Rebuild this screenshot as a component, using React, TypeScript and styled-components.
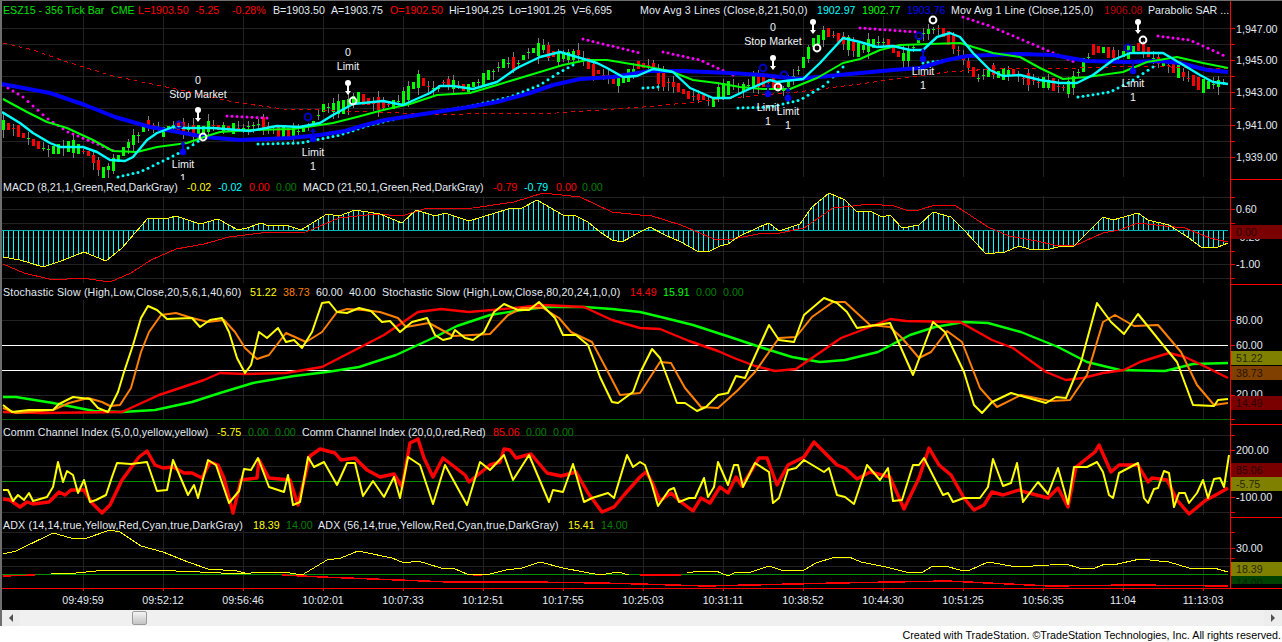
import React from 'react';
import styled, { createGlobalStyle } from 'styled-components';

type Pt = [number, number];

const pts = (s: string): Pt[] =>
  s
    .trim()
    .split(/\s+/)
    .map((p) => p.split(',').map(Number) as Pt);

const yAt = (line: Pt[], x: number) => {
  if (x <= line[0][0]) return line[0][1];
  for (let i = 1; i < line.length; i++) {
    if (x <= line[i][0]) {
      const [x0, y0] = line[i - 1];
      const [x1, y1] = line[i];
      return y0 + ((y1 - y0) * (x - x0)) / (x1 - x0);
    }
  }
  return line[line.length - 1][1];
};

// main pane
const BLUE = '2,84 50,93 85,105 115,117 150,127 178,132 205,137 240,140 290,138 320,135 345,131 365,125 385,120 430,113 463,108 497,102 530,93 553,85 580,79 613,77 650,71 683,71 730,73 763,75 797,79 860,73 893,70 920,68 947,60 967,56 1020,54 1053,55 1087,61 1127,62 1160,61 1180,63 1207,70 1228,72';
const CYAN = '2,112 20,123 33,133 50,143 60,147 83,147 97,152 110,160 125,161 133,157 147,140 157,133 173,127 185,128 213,128 250,131 277,126 300,127 320,123 333,115 353,104 383,101 403,105 430,93 440,86 453,86 473,89 497,82 517,68 540,57 560,52 577,57 597,63 607,68 623,77 637,76 653,69 673,72 690,88 713,98 730,98 747,90 770,80 777,82 803,79 820,63 843,38 860,42 877,47 893,46 910,50 923,50 937,37 950,33 960,37 973,53 990,70 1003,76 1020,75 1040,80 1060,83 1077,83 1093,75 1113,60 1130,53 1163,53 1180,63 1200,75 1213,82 1228,84';
const GREEN = '3,99 27,112 47,122 67,128 93,140 113,151 137,152 157,147 187,143 207,136 220,132 250,130 293,129 307,127 333,123 357,117 383,110 410,104 437,95 470,93 497,85 530,75 563,65 587,60 607,60 643,66 670,71 693,80 717,83 740,87 763,89 790,89 817,78 843,63 860,59 880,50 900,45 960,43 993,53 1020,57 1040,68 1063,79 1087,77 1123,72 1147,62 1177,57 1203,63 1228,68';
const DASH = '3,43 33,50 67,62 113,76 147,83 190,92 233,102 283,109 323,110 367,112 430,114 463,114 557,113 643,107 697,102 750,96 797,92 860,84 910,77 947,72 993,69 1077,68 1143,66 1227,69';
const PRICE = pts('3,125 13,128 23,135 33,142 43,148 53,150 63,147 73,147 88,153 98,165 103,172 113,165 122,153 128,145 138,135 148,123 153,125 163,132 173,125 183,128 200,132 210,125 223,128 243,128 263,123 277,132 297,132 313,123 323,108 343,107 357,97 373,103 393,105 408,93 417,80 423,82 430,88 437,90 443,82 455,85 467,88 477,83 487,76 503,63 518,63 528,52 543,48 558,57 573,55 578,52 593,70 607,77 617,82 630,75 638,65 653,65 658,78 670,83 678,87 688,95 703,98 713,103 718,92 733,85 743,88 758,80 773,83 783,90 802,65 813,43 827,32 833,35 848,43 858,50 863,47 873,43 888,42 893,50 903,57 908,55 923,33 938,28 953,42 958,50 963,57 973,72 978,78 993,70 998,75 1013,72 1023,78 1038,82 1053,85 1068,88 1073,82 1078,72 1093,50 1103,50 1118,57 1137,47 1143,47 1153,58 1173,68 1188,78 1203,86 1227,82');
const SAR_MAGENTA = ['3,85 13,91 23,97 33,106 48,119 68,132 102,146 117,152', '227,116 267,118', '583,39 640,53', '663,52 700,60 733,75', '860,28 917,32', '963,17 990,26 1030,43 1077,63', '1158,36 1190,40 1227,57'];
const SAR_CYAN = ['118,177 140,172 165,160 185,150 200,140', '258,144 300,143 340,135 370,125 400,118 430,113 470,106 510,97 540,85 560,72 577,63', '643,88 660,87', '738,108 770,107 800,100 825,85 843,67', '923,63 947,60', '1078,97 1110,92 1130,82 1153,67'];

// macd pane
const MACD_Y = pts('3,257 20,260 43,267 61,261 84,252 106,261 122,248 148,218 169,218 176,216 200,224 218,219 238,230 247,228 261,223 269,226 286,225 301,230 327,214 339,216 355,210 380,214 402,223 416,210 435,216 445,213 469,221 508,209 522,208 537,200 563,215 576,216 588,222 600,232 612,240 622,242 640,232 650,227 665,235 681,242 697,251 708,252 720,246 728,244 738,237 759,227 769,223 779,231 800,224 812,207 829,193 845,200 857,212 870,211 882,217 890,215 902,228 919,225 933,212 951,217 964,230 986,254 1005,252 1019,246 1029,249 1050,249 1062,246 1074,246 1103,217 1113,220 1138,213 1148,220 1169,225 1189,238 1201,247 1218,247 1228,243');
const MACD_R = '3,264 24,273 53,280 82,278 110,282 131,273 151,260 176,249 204,244 229,237 261,233 306,232 339,218 376,214 402,216 424,209 473,208 514,202 543,193 580,197 612,212 640,215 652,216 681,225 714,239 728,240 738,238 763,233 775,234 804,228 833,208 853,206 870,204 894,206 906,210 919,210 935,205 956,206 988,227 1009,236 1037,241 1054,245 1074,246 1103,233 1119,230 1138,223 1165,226 1185,228 1210,238 1228,242';

// stochastic pane
const ST_YELLOW = '3,405 12,412 29,410 53,410 59,404 73,397 90,399 98,408 108,412 118,392 124,372 133,345 141,318 148,306 157,310 167,319 192,318 200,327 210,320 222,318 229,332 237,358 245,373 251,365 259,332 267,338 278,328 286,342 294,340 302,348 312,332 322,303 329,302 337,312 347,313 359,308 371,311 382,322 390,321 400,332 412,322 427,318 435,335 443,340 451,338 455,330 465,338 473,340 484,332 494,312 504,304 518,310 529,310 539,302 555,318 563,335 576,335 588,345 600,377 612,402 618,403 633,392 640,373 652,349 660,358 677,403 685,403 697,411 706,407 718,395 728,393 736,376 745,378 769,325 779,340 794,342 804,315 824,298 837,303 847,312 857,328 890,323 913,375 933,322 945,332 964,372 974,405 982,413 992,402 1011,393 1046,403 1056,397 1066,398 1081,362 1097,303 1111,322 1124,334 1138,314 1163,345 1177,362 1193,405 1214,406 1218,400 1228,399';
const ST_ORANGE = '3,408 16,413 53,410 69,403 88,398 102,402 110,406 120,405 131,388 141,352 149,332 161,315 176,313 192,318 208,322 224,320 235,332 245,348 257,359 269,355 286,333 306,342 322,332 337,312 347,309 363,310 380,312 398,318 406,327 429,323 453,336 490,334 508,315 522,308 543,308 559,318 571,332 592,342 608,372 620,395 640,393 660,362 671,363 685,388 701,407 718,408 738,390 755,372 779,338 796,337 812,317 833,302 845,302 870,325 890,327 902,338 919,358 931,352 947,331 962,342 980,388 997,407 1021,395 1050,401 1070,400 1087,375 1103,322 1115,315 1134,326 1158,325 1181,352 1197,385 1214,405 1228,403';
const ST_RED = '3,412 41,413 122,412 159,395 204,380 220,373 245,374 286,373 322,367 355,350 384,335 418,312 441,309 469,312 514,308 543,305 584,307 612,320 640,328 660,329 689,341 718,351 734,358 755,366 775,371 796,369 812,358 841,338 857,332 890,319 906,321 960,322 992,340 1013,348 1046,372 1066,380 1083,378 1103,373 1124,370 1140,362 1169,353 1185,357 1206,367 1228,378';
const ST_GREEN = '3,397 16,397 53,403 94,411 122,412 155,410 192,402 220,393 253,383 294,376 327,372 359,367 396,355 433,338 457,326 490,315 522,310 547,307 584,307 612,309 640,312 665,318 693,325 730,337 763,348 792,357 820,362 845,360 878,352 910,335 935,327 964,322 988,323 1021,332 1058,347 1087,362 1120,370 1165,371 1193,364 1228,363';

// cci pane
const CCI_RED = '3,499 10,500 20,507 27,502 33,504 49,502 59,492 65,495 71,490 84,490 92,503 102,513 110,505 122,480 139,457 147,451 155,465 163,468 173,467 184,473 192,473 202,478 210,462 218,465 224,478 233,513 241,480 257,478 259,460 269,478 290,480 298,505 310,456 320,449 335,453 341,460 355,458 367,470 380,477 394,474 402,487 410,443 418,439 424,458 433,477 443,458 465,475 469,482 490,465 500,462 504,449 510,450 516,458 531,454 547,473 561,476 576,472 588,493 602,512 614,507 624,495 640,477 646,472 652,482 660,501 671,493 681,502 693,511 701,498 710,503 720,487 728,493 736,477 742,486 759,458 767,458 777,485 788,465 804,457 814,442 837,465 845,468 857,479 870,472 890,477 904,509 919,478 929,448 939,465 951,475 964,498 974,510 984,505 992,492 1003,495 1019,490 1025,492 1048,498 1058,488 1068,507 1076,467 1095,452 1099,445 1111,472 1119,465 1138,465 1148,482 1152,478 1167,480 1177,500 1189,514 1206,500 1214,496 1228,488';
const CCI_YELLOW = '3,490 8,490 13,501 18,495 24,500 29,493 33,501 47,497 53,487 58,462 63,482 67,471 73,475 78,493 84,480 90,502 96,500 106,495 112,477 117,463 131,464 147,462 157,491 167,490 173,460 188,495 194,485 198,498 208,460 216,465 229,503 239,491 244,469 251,470 258,458 269,487 284,492 288,475 293,505 300,502 308,457 314,467 324,462 337,485 347,463 355,463 363,496 373,481 384,497 394,477 400,498 408,457 420,465 433,504 445,465 467,505 480,462 490,470 504,455 513,480 529,455 549,502 553,490 563,492 573,464 584,502 592,498 608,493 614,498 627,455 633,467 640,462 645,465 652,485 658,506 669,490 674,488 679,502 689,498 695,498 704,478 708,497 714,487 718,462 728,485 734,465 738,465 743,487 755,463 769,472 773,503 779,498 788,470 796,468 804,460 824,472 829,468 837,495 845,497 854,504 867,465 880,480 888,468 893,501 902,500 913,465 919,465 924,458 943,495 948,493 953,502 964,498 980,498 988,487 993,459 1003,486 1011,483 1017,463 1023,502 1038,482 1048,494 1058,468 1068,504 1074,467 1087,467 1097,462 1103,472 1109,495 1113,498 1119,473 1138,463 1144,498 1148,503 1154,489 1158,488 1164,471 1169,473 1174,507 1179,493 1185,493 1189,503 1197,493 1203,480 1208,498 1214,479 1220,478 1224,487 1229,455';

// adx pane
const ADX_A = '3,554 16,551 53,533 71,538 84,539 110,530 120,532 141,546 163,552 188,562 208,569 237,571 245,573';
const ADX_B = '51,574 76,573 106,570 151,570 200,572 241,574 261,572 290,573 302,575 327,560 341,558 358,551 392,558 404,563 418,561 441,568 453,568 469,575 490,574 506,570 522,568 540,562 563,568 584,572 600,575 618,572 629,575';
const ADX_C = '687,573 699,571 716,571 728,576 736,572 751,572 769,566 781,570 804,570 816,563 835,557 849,557 861,562 886,567 906,572 923,572 931,567 945,566 960,570 970,570 988,562 1017,567 1066,564 1079,568 1095,568 1105,564 1113,565 1140,559 1169,562 1189,568 1214,568 1228,572';
const ADX_R = ['3,576 35,575', '282,575 322,577 449,582 531,582 600,583 640,584 706,586 837,583 947,581 988,583 1050,586 1132,585 1228,586', '473,575 482,575', '640,575 681,575'];

const TIMES = ['09:49:59', '09:52:12', '09:56:46', '10:02:01', '10:07:33', '10:12:51', '10:17:55', '10:25:03', '10:31:11', '10:38:52', '10:44:30', '10:51:25', '10:56:35', '11:04', '11:13:03'];
const VERTICALS = TIMES.map((_, i) => 83 + i * 80);

const C = {
  text: '#e3ebf3',
  red: '#ff0000',
  dkRed: '#c00000',
  lime: '#00ff00',
  dkGreen: '#008000',
  yellow: '#ffff00',
  cyan: '#00ffff',
  orange: '#ff8000',
  blue: '#0000ff',
  navy: '#0000c8',
};

const GlobalStyle = createGlobalStyle`
  html, body {
    margin: 0;
    background: #fff;
    overflow: hidden;
  }
`;

const Page = styled.div`
  width: 1282px;
  height: 642px;
  font-family: 'Liberation Sans', Arial, sans-serif;
  font-size: 10.67px;
  display: flex;
  flex-direction: column;
`;

const ChartWindow = styled.div`
  height: 626px;
  background: #000;
  border-top: 1px solid #6e6e6e;
  border-left: 2px solid #6e6e6e;
  display: flex;
  flex-direction: column;
`;

const Pane = styled.section<{ $h: number }>`
  height: ${(p) => p.$h}px;
  flex: none;
  display: grid;
  grid-template-columns: 1228px 52px;
`;

const Plot = styled.div`
  position: relative;
  overflow: hidden;
`;

const PlotSvg = styled.svg`
  display: block;
  width: 1228px;
  height: 100%;
`;

const Legend = styled.div<{ $top?: number }>`
  position: absolute;
  top: ${(p) => p.$top ?? 0}px;
  left: 1px;
  display: flex;
  line-height: 14px;
  white-space: nowrap;
`;

const Item = styled.span<{ $w?: number; $c?: string; $ls?: number }>`
  flex: none;
  width: ${(p) => (p.$w ? `${p.$w}px` : 'auto')};
  color: ${(p) => p.$c ?? C.text};
  letter-spacing: ${(p) => p.$ls ?? 0}px;
`;

const Axis = styled.div`
  position: relative;
  overflow: hidden;
  border-left: 1px solid ${C.red};
  border-bottom: 1px solid ${C.red};
  box-sizing: border-box;
`;

const AxisSvg = styled.svg`
  position: absolute;
  left: 0;
  top: 0;
  width: 51px;
  height: 100%;
`;

const AxisLabel = styled.span<{ $y: number }>`
  position: absolute;
  left: 5px;
  top: ${(p) => p.$y - 7}px;
  line-height: 14px;
  color: ${C.text};
  white-space: nowrap;
`;

const ValueTag = styled.span<{ $y: number; $h?: number; $bg: string; $fg: string }>`
  position: absolute;
  left: 0;
  right: 0;
  top: ${(p) => p.$y}px;
  height: ${(p) => p.$h ?? 14}px;
  padding-left: 5px;
  overflow: hidden;
  line-height: 14px;
  background: ${(p) => p.$bg};
  color: ${(p) => p.$fg};
`;

const TimeAxis = styled.div`
  height: 21px;
  flex: none;
  display: flex;
  padding-left: 41px;
`;

const TimeCell = styled.span`
  position: relative;
  flex: none;
  width: 80px;
  text-align: center;
  line-height: 22px;
  color: ${C.text};
  &::before {
    content: '';
    position: absolute;
    left: 40px;
    top: 0;
    width: 1px;
    height: 2px;
    background: ${C.red};
  }
`;

const Scrollbar = styled.div`
  height: 16px;
  flex: none;
  display: flex;
  align-items: center;
  background: linear-gradient(#e2e2e2, #f0f0f0 15%, #eeeeee);
`;

const ScrollButton = styled.button<{ $dir: 'left' | 'right' }>`
  width: 18px;
  height: 100%;
  flex: none;
  padding: 0;
  border: 0;
  background: #ededed;
  display: flex;
  align-items: center;
  justify-content: center;
  &::before {
    content: '';
    border-style: solid;
    border-color: transparent;
    border-width: 4px 0 4px 0;
    ${(p) => (p.$dir === 'left' ? 'border-right: 4px solid #505050;' : 'border-left: 4px solid #505050;')}
  }
`;

const ScrollTrack = styled.div`
  flex: 1;
  height: 100%;
  background: #f0f0f0;
`;

const ScrollThumb = styled.div`
  width: 15px;
  height: 14px;
  margin: 1px 0 0 112px;
  box-sizing: border-box;
  border: 1px solid #9a9a9a;
  border-radius: 2px;
  background: linear-gradient(#f4f4f4, #dcdcdc 50%, #c4c4c4);
`;

const Footer = styled.footer`
  flex: 1;
  text-align: right;
  padding-right: 1px;
  font-size: 10.73px;
  line-height: 18px;
  color: #000;
`;

const OrderText = styled.text`
  font-family: 'Liberation Sans', Arial, sans-serif;
  font-size: 10.67px;
  fill: #f0f4f8;
  text-anchor: middle;
`;

const Grid: React.FC<{ rows: number[]; y0: number; y1: number }> = ({ rows, y0, y1 }) => (
  <g stroke="#222222" strokeWidth={1} shapeRendering="crispEdges">
    {rows.map((y) => (
      <line key={`h${y}`} x1={2} x2={1230} y1={y + 0.5} y2={y + 0.5} />
    ))}
    {VERTICALS.map((x) => (
      <line key={`v${x}`} x1={x + 0.5} x2={x + 0.5} y1={y0} y2={y1} />
    ))}
  </g>
);

const Line: React.FC<{ d: string; c: string; w?: number; dash?: string }> = ({ d, c, w = 1, dash }) => (
  <polyline
    points={d}
    fill="none"
    stroke={c}
    strokeWidth={w}
    strokeDasharray={dash}
    strokeLinejoin="round"
    shapeRendering={w < 2 ? 'crispEdges' : undefined}
  />
);

const Candles: React.FC = () => {
  let seed = 7919;
  const rnd = () => {
    seed = (seed * 16807) % 2147483647;
    return seed / 2147483647;
  };
  const bars = [];
  for (let k = 0; k < 245; k++) {
    const x = 3 + k * 5;
    const mid = yAt(PRICE, x);
    const up = yAt(PRICE, x + 5) < mid + (rnd() < 0.25 ? 4 : 0);
    const doji = rnd() < 0.3;
    const h = doji ? 1 : 4 + rnd() * 10;
    const top = Math.round(mid - h / 2);
    const hasWick = doji || rnd() < 0.5;
    const wickTop = top - (hasWick ? 2 + rnd() * 5 : 0);
    const wickBot = top + h + (hasWick ? 2 + rnd() * 6 : 0);
    bars.push(
      <g key={x} shapeRendering="crispEdges">
        <line x1={x + 0.5} x2={x + 0.5} y1={wickTop} y2={wickBot} stroke="#7c7c7c" />
        <rect x={x - 1} y={top} width={3} height={Math.round(h)} fill={up ? C.lime : C.red} />
      </g>,
    );
  }
  return <g>{bars}</g>;
};

const Dots: React.FC<{ segments: string[]; c: string }> = ({ segments, c }) => (
  <g fill={c}>
    {segments.map((s) => {
      const line = pts(s);
      const start = line[0][0];
      const end = line[line.length - 1][0];
      const dots = [];
      for (let x = start; x <= end; x += 5) {
        dots.push(<circle key={x} cx={x} cy={yAt(line, x)} r={1.5} />);
      }
      return <g key={s}>{dots}</g>;
    })}
  </g>
);

const SellPin: React.FC<{ x: number; y: number }> = ({ x, y }) => (
  <g>
    <line x1={x} x2={x} y1={y} y2={y + 11} stroke="#fff" strokeWidth={2} />
    <path d={`M${x - 3} ${y + 8}h6l-3 4z`} fill="#fff" />
    <circle cx={x} cy={y} r={3} fill="#fff" />
  </g>
);

const BuyPin: React.FC<{ x: number; y: number; len?: number }> = ({ x, y, len = 10 }) => (
  <g>
    <line x1={x} x2={x} y1={y} y2={y - len} stroke={C.navy} strokeWidth={2} />
    <path d={`M${x - 3} ${y - len + 3}h6l-3 -4z`} fill={C.navy} />
    <circle cx={x} cy={y} r={3.2} fill={C.blue} />
  </g>
);

const Ring: React.FC<{ x: number; y: number; c?: string }> = ({ x, y, c = '#fff' }) => (
  <circle cx={x} cy={y} r={3.4} fill="none" stroke={c} strokeWidth={2} />
);

const MainPlot: React.FC = () => (
  <PlotSvg viewBox="2 1 1228 179" preserveAspectRatio="none">
    <Grid rows={[28, 44, 60, 76, 92, 108, 125, 141, 157]} y0={16} y1={177} />
    <Candles />
    <Line d={DASH} c="#e00000" dash="4 4" />
    <Dots segments={SAR_MAGENTA} c="#ff00ff" />
    <Dots segments={SAR_CYAN} c={C.cyan} />
    <Line d={BLUE} c={C.blue} w={4} />
    <Line d={GREEN} c={C.lime} w={2} />
    <Line d={CYAN} c={C.cyan} w={2.4} />

    <Ring x={179} y={125} c={C.navy} />
    <Ring x={308} y={117} c={C.navy} />
    <Ring x={763} y={68} c={C.navy} />
    <Ring x={784} y={75} c={C.navy} />
    <Ring x={919} y={36} c={C.navy} />
    <Ring x={1128} y={48} c={C.navy} />
    <Ring x={203} y={137} />
    <Ring x={353} y={101} />
    <Ring x={778} y={87} />
    <Ring x={817} y={48} />
    <Ring x={933} y={20} />
    <Ring x={1143} y={40} />

    <SellPin x={198} y={110} />
    <SellPin x={348} y={83} />
    <SellPin x={773} y={58} />
    <SellPin x={813} y={22} />
    <SellPin x={1138} y={22} />
    <BuyPin x={183} y={152} />
    <BuyPin x={313} y={139} />
    <BuyPin x={768} y={94} />
    <BuyPin x={788} y={98} />
    <BuyPin x={923} y={59} />
    <BuyPin x={1133} y={71} />

    <OrderText x={198} y={84}>0</OrderText>
    <OrderText x={198} y={98}>Stop Market</OrderText>
    <OrderText x={183} y={168}>Limit</OrderText>
    <OrderText x={183} y={182}>1</OrderText>
    <OrderText x={348} y={56}>0</OrderText>
    <OrderText x={348} y={70}>Limit</OrderText>
    <OrderText x={313} y={156}>Limit</OrderText>
    <OrderText x={313} y={170}>1</OrderText>
    <OrderText x={773} y={31}>0</OrderText>
    <OrderText x={773} y={45}>Stop Market</OrderText>
    <OrderText x={768} y={111}>Limit</OrderText>
    <OrderText x={768} y={125}>1</OrderText>
    <OrderText x={788} y={115}>Limit</OrderText>
    <OrderText x={788} y={129}>1</OrderText>
    <OrderText x={923} y={75}>Limit</OrderText>
    <OrderText x={923} y={89}>1</OrderText>
    <OrderText x={1133} y={87}>Limit</OrderText>
    <OrderText x={1133} y={101}>1</OrderText>
  </PlotSvg>
);

const MacdPlot: React.FC = () => {
  const bars = [];
  for (let x = 3; x < 1228; x += 5) {
    bars.push(<line key={x} x1={x + 0.5} x2={x + 0.5} y1={230} y2={yAt(MACD_Y, x)} />);
  }
  return (
    <PlotSvg viewBox="2 180 1228 105" preserveAspectRatio="none">
      <Grid rows={[197, 209, 223, 237, 251, 264, 278]} y0={196} y1={283} />
      <g stroke={C.cyan} shapeRendering="crispEdges">{bars}</g>
      <line x1={2} x2={1228} y1={230.5} y2={230.5} stroke="#00b4b4" shapeRendering="crispEdges" />
      <Line d={MACD_R} c="#f00000" />
      <polyline points={MACD_Y.map((p) => p.join(',')).join(' ')} fill="none" stroke={C.yellow} shapeRendering="crispEdges" />
    </PlotSvg>
  );
};

const StochPlot: React.FC = () => (
  <PlotSvg viewBox="2 285 1228 140" preserveAspectRatio="none">
    <Grid rows={[320, 395]} y0={300} y1={419} />
    <line x1={2} x2={1228} y1={345.5} y2={345.5} stroke="#fff" shapeRendering="crispEdges" />
    <line x1={2} x2={1228} y1={370.5} y2={370.5} stroke="#fff" shapeRendering="crispEdges" />
    <line x1={2} x2={1230} y1={419.5} y2={419.5} stroke="#006400" shapeRendering="crispEdges" />
    <Line d={ST_GREEN} c={C.lime} w={2.4} />
    <Line d={ST_RED} c={C.red} w={2.4} />
    <Line d={ST_ORANGE} c={C.orange} w={2} />
    <Line d={ST_YELLOW} c={C.yellow} w={2} />
  </PlotSvg>
);

const CciPlot: React.FC = () => (
  <PlotSvg viewBox="2 425 1228 93" preserveAspectRatio="none">
    <Grid rows={[435, 450, 466, 497, 512]} y0={438} y1={515} />
    <line x1={2} x2={1228} y1={481.5} y2={481.5} stroke="#009000" shapeRendering="crispEdges" />
    <Line d={CCI_RED} c={C.red} w={3.4} />
    <Line d={CCI_YELLOW} c={C.yellow} w={2} />
  </PlotSvg>
);

const AdxPlot: React.FC = () => (
  <PlotSvg viewBox="2 518 1228 71" preserveAspectRatio="none">
    <Grid rows={[532, 548, 558, 566]} y0={530} y1={588} />
    <line x1={2} x2={1228} y1={574.5} y2={574.5} stroke="#009000" shapeRendering="crispEdges" />
    {ADX_R.map((d) => (
      <Line key={d} d={d} c={C.red} w={1.5} />
    ))}
    <Line d={ADX_A} c={C.yellow} />
    <Line d={ADX_B} c={C.yellow} />
    <Line d={ADX_C} c={C.yellow} />
    <line x1={2} x2={1230} y1={588.5} y2={588.5} stroke={C.red} shapeRendering="crispEdges" />
  </PlotSvg>
);

const AxisTicks: React.FC<{ ys: number[] }> = ({ ys }) => (
  <AxisSvg>
    {ys.map((y) => (
      <line key={y} x1={0} x2={4} y1={y + 0.5} y2={y + 0.5} stroke={C.red} shapeRendering="crispEdges" />
    ))}
  </AxisSvg>
);

const App: React.FC = () => (
  <Page>
    <GlobalStyle />
    <ChartWindow>
      <Pane $h={179}>
        <Plot>
          <MainPlot />
          <Legend $top={2}>
            <Item $w={108} $c="#00e000">ESZ15 - 356 Tick Bar</Item>
            <Item $w={27} $c="#00e000">CME</Item>
            <Item $w={57} $c={C.red}>L=1903.50</Item>
            <Item $w={37} $c={C.red}>-5.25</Item>
            <Item $w={41} $c={C.red}>-0.28%</Item>
            <Item $w={58}>B=1903.50</Item>
            <Item $w={59}>A=1903.75</Item>
            <Item $w={59} $c={C.red}>O=1902.50</Item>
            <Item $w={60}>Hi=1904.25</Item>
            <Item $w={63}>Lo=1901.25</Item>
            <Item $w={68}>V=6,695</Item>
            <Item $w={177} $ls={0.15}>Mov Avg 3 Lines (Close,8,21,50,0)</Item>
            <Item $w={45} $c={C.cyan}>1902.97</Item>
            <Item $w={45} $c={C.lime}>1902.77</Item>
            <Item $w={44} $c="#0000ff">1903.76</Item>
            <Item $w={153} $ls={0.1}>Mov Avg 1 Line (Close,125,0)</Item>
            <Item $w={44} $c={C.dkRed}>1906.08</Item>
            <Item>Parabolic SAR ...</Item>
          </Legend>
        </Plot>
        <Axis>
          <AxisTicks ys={[27, 43, 59, 75, 91, 107, 124, 140, 156]} />
          <AxisLabel $y={28}>1,947.00</AxisLabel>
          <AxisLabel $y={59}>1,945.00</AxisLabel>
          <AxisLabel $y={91}>1,943.00</AxisLabel>
          <AxisLabel $y={124}>1,941.00</AxisLabel>
          <AxisLabel $y={156}>1,939.00</AxisLabel>
        </Axis>
      </Pane>
      <Pane $h={105}>
        <Plot>
          <MacdPlot />
          <Legend>
            <Item $w={184}>MACD (8,21,1,Green,Red,DarkGray)</Item>
            <Item $w={31} $c={C.yellow}>-0.02</Item>
            <Item $w={31} $c={C.cyan}>-0.02</Item>
            <Item $w={27} $c={C.red}>0.00</Item>
            <Item $w={27} $c={C.dkGreen}>0.00</Item>
            <Item $w={190}>MACD (21,50,1,Green,Red,DarkGray)</Item>
            <Item $w={31} $c={C.red}>-0.79</Item>
            <Item $w={32} $c={C.cyan}>-0.79</Item>
            <Item $w={26} $c={C.red}>0.00</Item>
            <Item $c={C.dkGreen}>0.00</Item>
          </Legend>
        </Plot>
        <Axis>
          <AxisTicks ys={[17, 29, 43, 57, 71, 84, 98]} />
          <AxisLabel $y={29}>0.60</AxisLabel>
          <AxisLabel $y={57}>-0.20</AxisLabel>
          <AxisLabel $y={84}>-1.00</AxisLabel>
          <ValueTag $y={45} $bg="#7a0000" $fg="#2a0000">0.00</ValueTag>
        </Axis>
      </Pane>
      <Pane $h={140}>
        <Plot>
          <StochPlot />
          <Legend>
            <Item $w={247} $ls={0.17}>Stochastic Slow (High,Low,Close,20,5,6,1,40,60)</Item>
            <Item $w={33} $c={C.yellow}>51.22</Item>
            <Item $w={33} $c={C.orange}>38.73</Item>
            <Item $w={33}>60.00</Item>
            <Item $w={33}>40.00</Item>
            <Item $w={248} $ls={0.17}>Stochastic Slow (High,Low,Close,80,20,24,1,0,0)</Item>
            <Item $w={33} $c={C.red}>14.49</Item>
            <Item $w={33} $c={C.lime}>15.91</Item>
            <Item $w={27} $c={C.dkGreen}>0.00</Item>
            <Item $c={C.dkGreen}>0.00</Item>
          </Legend>
        </Plot>
        <Axis>
          <AxisTicks ys={[35, 60, 85, 110, 134]} />
          <AxisLabel $y={35}>80.00</AxisLabel>
          <AxisLabel $y={60}>60.00</AxisLabel>
          <AxisLabel $y={109}>20.00</AxisLabel>
          <ValueTag $y={66} $bg="#808000" $fg="#282800">51.22</ValueTag>
          <ValueTag $y={81} $bg="#804000" $fg="#281400">38.73</ValueTag>
          <ValueTag $y={111} $bg="#7a0000" $fg="#2a0000">14.49</ValueTag>
        </Axis>
      </Pane>
      <Pane $h={93}>
        <Plot>
          <CciPlot />
          <Legend>
            <Item $w={214} $ls={0.1}>Comm Channel Index (5,0,0,yellow,yellow)</Item>
            <Item $w={31} $c={C.yellow}>-5.75</Item>
            <Item $w={27} $c={C.dkGreen}>0.00</Item>
            <Item $w={27} $c={C.dkGreen}>0.00</Item>
            <Item $w={191}>Comm Channel Index (20,0,0,red,Red)</Item>
            <Item $w={33} $c={C.red}>85.06</Item>
            <Item $w={27} $c={C.dkGreen}>0.00</Item>
            <Item $c={C.dkGreen}>0.00</Item>
          </Legend>
        </Plot>
        <Axis>
          <AxisTicks ys={[10, 25, 41, 56, 72, 87]} />
          <AxisLabel $y={25}>200.00</AxisLabel>
          <AxisLabel $y={72}>-100.00</AxisLabel>
          <ValueTag $y={38} $bg="#7a0000" $fg="#2a0000">85.06</ValueTag>
          <ValueTag $y={52} $bg="#808000" $fg="#282800">-5.75</ValueTag>
        </Axis>
      </Pane>
      <Pane $h={71}>
        <Plot>
          <AdxPlot />
          <Legend>
            <Item $w={250} $ls={0.15}>ADX (14,14,true,Yellow,Red,Cyan,true,DarkGray)</Item>
            <Item $w={33} $c={C.yellow}>18.39</Item>
            <Item $w={32} $c={C.dkGreen}>14.00</Item>
            <Item $w={250} $ls={0.17}>ADX (56,14,true,Yellow,Red,Cyan,true,DarkGray)</Item>
            <Item $w={33} $c={C.yellow}>15.41</Item>
            <Item $c={C.dkGreen}>14.00</Item>
          </Legend>
        </Plot>
        <Axis>
          <AxisTicks ys={[14, 30, 40, 55]} />
          <AxisLabel $y={30}>30.00</AxisLabel>
          <ValueTag $y={58} $h={8} $bg="#004000" $fg="#002000">14.00</ValueTag>
          <ValueTag $y={44} $bg="#808000" $fg="#282800">18.39</ValueTag>
        </Axis>
      </Pane>
      <TimeAxis>
        {TIMES.map((t) => (
          <TimeCell key={t}>{t}</TimeCell>
        ))}
      </TimeAxis>
      <Scrollbar>
        <ScrollButton $dir="left" aria-label="left" />
        <ScrollTrack>
          <ScrollThumb />
        </ScrollTrack>
        <ScrollButton $dir="right" aria-label="right" />
      </Scrollbar>
    </ChartWindow>
    <Footer>Created with TradeStation. ©TradeStation Technologies, Inc. All rights reserved.</Footer>
  </Page>
);

export default App;
